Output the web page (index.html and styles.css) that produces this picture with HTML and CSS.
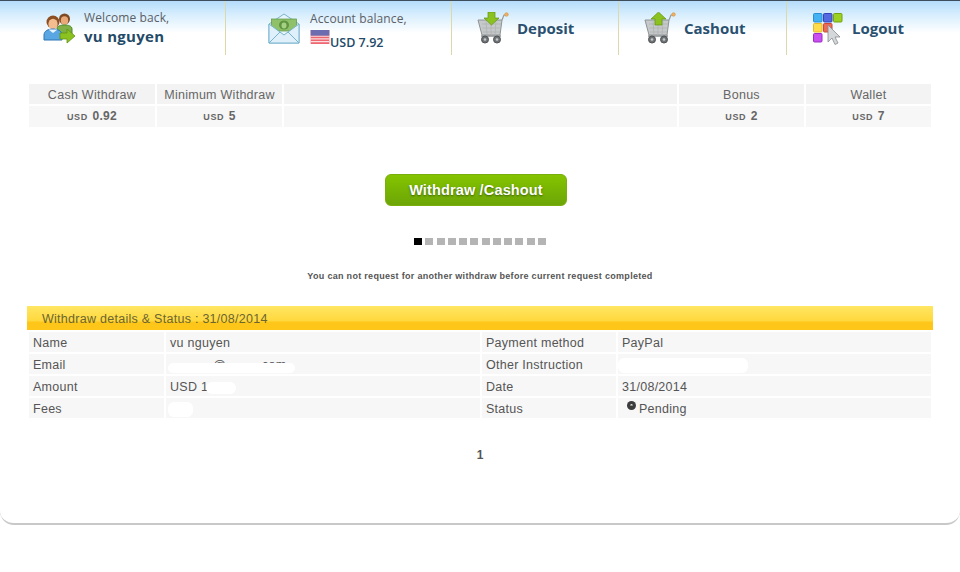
FILE: index.html
```html
<!DOCTYPE html>
<html lang="en">
<head>
<meta charset="utf-8">
<title>Withdraw</title>
<link rel="stylesheet" href="styles.css">
</head>
<body>
<div class="page">
  <header class="top">
    <div class="nav nav-welcome">
      <svg class="ico ico-users" viewBox="0 0 32 32"><circle cx="21.5" cy="7" r="5.500" fill="#7d4a22"/><ellipse cx="21.5" cy="8.500" rx="3.700" ry="4.200" fill="#e8a878"/><path d="M14 22v-5c0-3 3.500-4 7.500-4s7.500 1 7.500 4v5z" fill="#7fb045" stroke="#4f8a28"/><circle cx="10" cy="10" r="6.500" fill="#8c4f22"/><ellipse cx="10" cy="12" rx="4.600" ry="5.200" fill="#f3bd90"/><path d="M1 28v-5c0-4 4-6 9-6s9 2 9 6v5z" fill="#5aa6e2" stroke="#2b74b4"/><path d="M5.500 17.500l4.500 3.500 4.500-3.500z" fill="#eaf6fd"/><path d="M17 21h7v-4l8 7-8 7v-4h-7z" fill="#8cc21f" stroke="#5f9412" stroke-width=".8"/></svg>
      <div class="who who-welcome"><span class="lbl">Welcome back,</span><strong class="name">vu nguyen</strong></div>
    </div>
    <div class="nav nav-balance">
      <svg class="ico ico-mail" viewBox="0 0 32 32"><path d="M1 11L16 1l15 10v19H1z" fill="#e6f4fc" stroke="#79b4cf"/><rect x="3.500" y="6" width="25" height="12" fill="#8fc06a" stroke="#5d9440" stroke-width=".7"/><ellipse cx="16" cy="12" rx="5" ry="4.500" fill="#5f9440"/><ellipse cx="16" cy="12.500" rx="2.500" ry="3" fill="#a6d083"/><path d="M1 11l15 11 15-11v19H1z" fill="#dff0fa" stroke="#79b4cf"/><path d="M1 30l11-11M31 30L20 19" stroke="#79b4cf" fill="none"/></svg>
      <div class="who"><span class="lbl">Account balance,</span>
        <span class="bal"><svg class="flag" viewBox="0 0 20 15"><rect width="20" height="15" fill="#ef6670"/><path d="M0 3.500h20M0 6.500h20M0 9.500h20M0 12.500h20" stroke="#f8dede" stroke-width="1.200"/><rect width="20" height="6" fill="#6c6db0"/></svg><b>USD 7.92</b></span></div>
    </div>
    <a class="nav nav-deposit"><svg class="ico ico-cart" viewBox="0 0 32 32"><use href="#cart"/><path d="M11 0h7v6h4l-7.500 7L7 6h4z" fill="#8cc21f" stroke="#5f9412" stroke-width=".7"/></svg><span class="act">Deposit</span></a>
    <a class="nav nav-cashout"><svg class="ico ico-cart" viewBox="0 0 32 32"><use href="#cart"/><path d="M11 13V7H7l7.500-7L22 7h-4v6z" fill="#8cc21f" stroke="#5f9412" stroke-width=".7"/></svg><span class="act">Cashout</span></a>
    <a class="nav nav-logout"><svg class="ico ico-apps" viewBox="0 0 32 32"><rect x=".5" y=".5" width="8.500" height="8.500" rx="1" fill="#43b1f2" stroke="#2a8fd0"/><rect x="10.500" y=".5" width="8.500" height="8.500" rx="1" fill="#5569e0" stroke="#3445b8"/><rect x="20.500" y=".5" width="8.500" height="8.500" rx="1" fill="#9cd021" stroke="#74a312"/><rect x=".5" y="10.500" width="8.500" height="8.500" rx="1" fill="#ffdc4a" stroke="#e0b92c"/><rect x="10.500" y="10.500" width="8.500" height="8.500" rx="1" fill="#ee6a55" stroke="#c84a38"/><rect x=".5" y="20.500" width="8.500" height="8.500" rx="1" fill="#c94ff0" stroke="#9a2ec4"/><path d="M15 12v17l4-4 3 6.500 3-1.500-3-6h5z" fill="#d4d8da" stroke="#868c90" stroke-width=".8"/></svg><span class="act">Logout</span></a>
  </header>

  <svg class="defs" width="0" height="0"><defs><g id="cart"><path d="M1 8h24l-2 15H5z" fill="#c6c9ca" stroke="#8e9293"/><path d="M5 12h19M5.500 16h18M6 20h17M9 8l1 15M14 8v15M19 8l-1 15" stroke="#aeb2b3" stroke-width=".8"/><path d="M25 8l2-5h2" fill="none" stroke="#9a9a9a" stroke-width="1.200"/><circle cx="29.500" cy="2.500" r="1.800" fill="#f2b060" stroke="#c98a3a" stroke-width=".5"/><path d="M4 24h20" stroke="#8e9293" stroke-width="1.500"/><circle cx="8" cy="27.500" r="3.500" fill="#6e7274" stroke="#4f5355"/><circle cx="8" cy="27.500" r="1.300" fill="#c6c9ca"/><circle cx="20" cy="27.500" r="3.500" fill="#6e7274" stroke="#4f5355"/><circle cx="20" cy="27.500" r="1.300" fill="#c6c9ca"/></g></defs></svg>

  <section class="summary">
    <div class="c h">Cash Withdraw</div><div class="c h">Minimum Withdraw</div><div class="c h"></div><div class="c h">Bonus</div><div class="c h">Wallet</div>
    <div class="c v"><small>USD</small> 0.92</div><div class="c v"><small>USD</small> 5</div><div class="c v"></div><div class="c v"><small>USD</small> 2</div><div class="c v"><small>USD</small> 7</div>
  </section>

  <div class="cta"><button class="btn" type="button">Withdraw /Cashout</button></div>

  <div class="pager"><i class="on"></i><i></i><i></i><i></i><i></i><i></i><i></i><i></i><i></i><i></i><i></i><i></i></div>

  <p class="note">You can not request for another withdraw before current request completed</p>

  <section class="details">
    <h2 class="bar">Withdraw details &amp; Status : 31/08/2014</h2>
    <div class="grid">
      <div class="d">Name</div><div class="d">vu nguyen</div><div class="d">Payment method</div><div class="d">PayPal</div>
      <div class="d">Email</div><div class="d mask"><span class="frag-at">@</span><span class="frag-com">com</span><span class="blob blob-email"></span></div><div class="d">Other Instruction</div><div class="d mask"><span class="blob blob-other"></span></div>
      <div class="d">Amount</div><div class="d mask">USD 1<span class="blob blob-amount"></span></div><div class="d">Date</div><div class="d">31/08/2014</div>
      <div class="d">Fees</div><div class="d mask"><span class="blob blob-fees"></span></div><div class="d">Status</div><div class="d status"><svg class="dot" viewBox="0 0 10 10"><circle cx="5" cy="5" r="5" fill="#3c3c3c"/><path d="M3.500 5a1.500 1.700 0 0 1 3 0z" fill="#eee"/></svg>Pending</div>
    </div>
  </section>

  <div class="pagenum">1</div>
</div>
</body>
</html>
```
FILE: styles.css
```css
* { box-sizing: border-box; }
html, body { margin: 0; padding: 0; background: #fff; }
body { width: 960px; height: 572px; overflow: hidden; font-family: "Liberation Sans", Arial, sans-serif; color: #555; }
.page { height: 525px; border-bottom: 2px solid #c8c8c8; border-radius: 0 0 14px 14px; }
.top { display: flex; height: 55px; border-top: 1px solid #3d4d5c; background: linear-gradient(#b4dcfb 0, #d8eefd 14px, #fff 32px); }
.nav { display: flex; align-items: center; flex: none; height: 54px; border-right: 1px solid #dcd8a8; }
.nav-welcome { width: 226px; padding-left: 43px; gap: 9px; }
.nav-balance { width: 226px; padding-left: 42px; gap: 10px; }
.nav-deposit { width: 167px; padding-left: 25px; gap: 8px; }
.nav-cashout { width: 168px; padding-left: 25px; gap: 8px; }
.nav-logout { width: 174px; padding-left: 26px; gap: 7px; border-right: 0; }
.ico { flex: none; width: 32px; height: 32px; }
.ico-users { margin-top: -1px; }
.ico-mail { margin-top: 1px; }
.ico-cart { margin-top: 0; }
.ico-apps { margin-top: 1px; }
.who { display: flex; flex-direction: column; font-family: "Open Sans", sans-serif; }
.who-welcome { margin-bottom: 1px; }
.lbl { font-size: 12px; line-height: 17px; letter-spacing: .1px; color: #5a6066; }
.name { font-size: 15px; line-height: 20px; font-weight: 700; letter-spacing: .3px; color: #234a68; }
.bal { display: flex; align-items: flex-start; margin-top: 3px; height: 17px; }
.flag { width: 20px; height: 14px; }
.bal b { font-size: 12.5px; line-height: 14px; font-weight: 600; color: #234a68; margin-top: 6px; }
.act { font-family: "Open Sans", sans-serif; font-size: 15px; font-weight: 700; color: #2a5070; }
.defs { position: absolute; }
.summary { display: grid; grid-template-columns: 126px 125px 393px 125px 125px; grid-template-rows: 20px 21px; gap: 2px; width: 902px; margin: 29px 0 0 29px; }
.c { text-align: center; font-size: 12.5px; letter-spacing: .27px; line-height: 22px; color: #666; }
.h { background: #f3f3f3; }
.v { background: #f7f7f7; font-size: 12px; font-weight: 700; line-height: 20px; letter-spacing: .3px; }
.v small { font-size: 9px; letter-spacing: .6px; margin-right: 1px; }
.cta { display: flex; justify-content: center; margin-top: 47px; padding-right: 8px; }
.btn { width: 182px; height: 32px; padding: 0; border: 1px solid #7aae0c; border-radius: 6px; background: linear-gradient(#84c400, #6ca507); color: #fff; font: 700 14.5px/30px "Liberation Sans", Arial, sans-serif; letter-spacing: .15px; text-shadow: 0 1px 2px #3f6200; }
.pager { display: flex; justify-content: space-between; width: 132px; margin: 32px 0 0 414px; }
.pager i { display: block; width: 8px; height: 7px; background: #b4b4b4; }
.pager i.on { background: #000; }
.note { margin: 25px 0 0; text-align: center; font-size: 9px; line-height: 12px; font-weight: 700; letter-spacing: .3px; color: #555; }
.details { width: 906px; margin: 24px 0 0 27px; }
.bar { margin: 0; height: 24px; padding-left: 15px; background: linear-gradient(#ffe664 0, #ffd83c 15px, #ffc61a 16px, #ffc61a 100%); font-size: 12.5px; font-weight: 400; line-height: 26px; letter-spacing: .27px; color: #6b6530; }
.grid { display: grid; grid-template-columns: 135px 314px 134px 313px; grid-auto-rows: 20px; gap: 2px; margin: 2px 0 0 2px; }
.d { position: relative; background: #f7f7f7; padding-left: 4px; font-size: 12.5px; line-height: 22px; letter-spacing: .27px; color: #555; }
.mask { overflow: hidden; }
.blob { position: absolute; background: #fff; border-radius: 6px; }
.frag-at { position: absolute; left: 47px; }
.frag-com { position: absolute; left: 96px; }
.blob-email { left: 2px; top: 9px; width: 127px; height: 10px; }
.blob-other { left: 0; top: 4px; width: 130px; height: 15px; }
.blob-amount { left: 40px; top: 6px; width: 30px; height: 12px; }
.blob-fees { left: 2px; top: 4px; width: 25px; height: 15px; }
.status { display: flex; padding-left: 9px; }
.dot { width: 9px; height: 9px; margin: 3px 3px 0 0; flex: none; }
.pagenum { margin-top: 29px; text-align: center; font-size: 12px; font-weight: 700; line-height: 16px; color: #555; }
```
